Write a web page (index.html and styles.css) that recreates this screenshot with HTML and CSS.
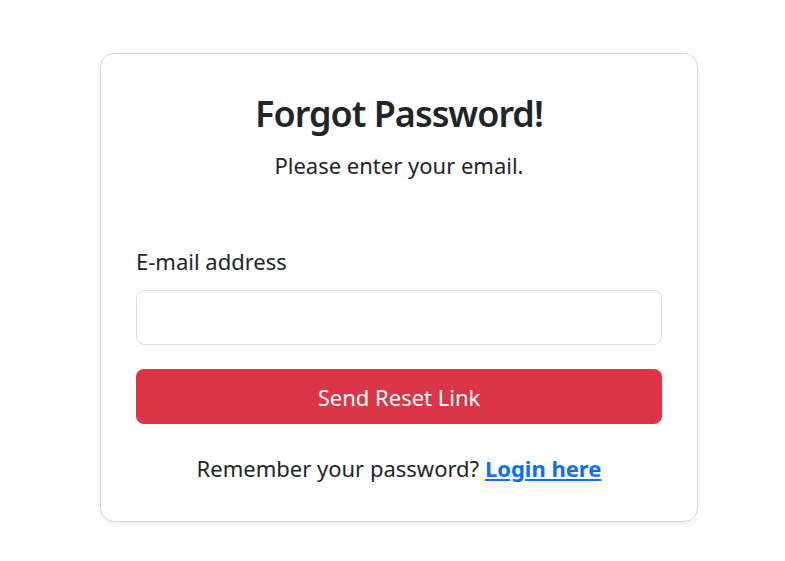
FILE: index.html
```html
<!DOCTYPE html>
<html lang="en">

<head>
    <meta charset="UTF-8">
    <meta name="viewport" content="width=device-width, initial-scale=1.0">
    <title>Forgot Password</title>

    <link rel="stylesheet" href="styles.css">
</head>

<body>
    <div class="reset-card">
        <h1 class="reset-title">Forgot Password!</h1>
        <p class="reset-subtitle">Please enter your email.</p>

        <form id="reset-form">
            <label for="email" class="reset-label">E-mail address</label>
            <input type="email" id="email" name="email" class="reset-input">
            <button type="button" class="reset-button">Send Reset Link</button>
        </form>

        <p class="login-text">Remember your password? <a href="#" class="login-link">Login here</a></p>
    </div>
</body>

</html>
```

FILE: styles.css
```css
body {
    background-color: #fff;
    font-family: "Noto Sans", "Open Sans", sans-serif;
    color: #212529;
    margin: 0;
    padding: 0;
    display: flex;
    align-items: flex-start;
    height: 100vh;
}

.reset-card {
    width: 526px;
    margin: 53px 0 0 100px;
    padding: 38px 35px 38px;
    border: 1px solid #d3d3d3;
    border-radius: 14px;
    box-shadow: 0 2px 6px rgba(0, 0, 0, 0.08);
    text-align: center;
}

.reset-title {
    font-size: 36px;
    font-weight: 600;
    letter-spacing: -1px;
    line-height: 1.2;
    margin: 0;
}

.reset-subtitle {
    font-size: 22px;
    line-height: 30px;
    margin: 15px 0 0;
}

#reset-form {
    display: flex;
    flex-direction: column;
    text-align: left;
    margin-top: 66px;
}

.reset-label {
    font-size: 22px;
    line-height: 30px;
    margin-bottom: 14px;
}

.reset-input {
    height: 55px;
    box-sizing: border-box;
    border: 1px solid #dee2e6;
    border-radius: 8px;
    font-size: 22px;
    padding: 0 16px;
    margin: 0 0 24px;
}

.reset-button {
    height: 55px;
    border: none;
    border-radius: 8px;
    background-color: #dc3545;
    color: #fff;
    font-family: inherit;
    font-size: 22px;
    cursor: pointer;
}

.login-text {
    font-size: 22px;
    line-height: 30px;
    margin: 29px 0 0;
}

.login-link {
    color: #0d6efd;
    font-weight: 700;
}
```
